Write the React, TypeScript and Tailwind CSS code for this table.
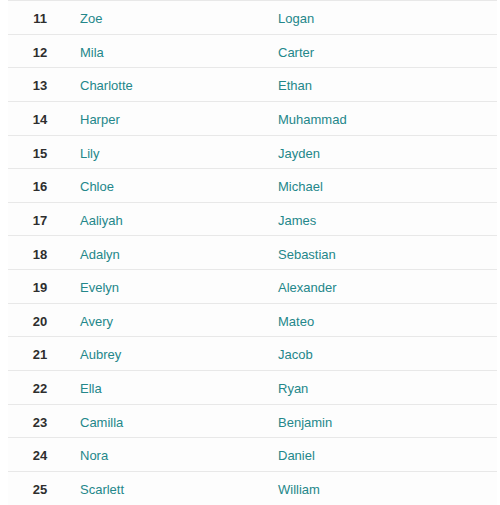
import React from 'react';

const rows: [number, string, string][] = [
  [11, 'Zoe', 'Logan'],
  [12, 'Mila', 'Carter'],
  [13, 'Charlotte', 'Ethan'],
  [14, 'Harper', 'Muhammad'],
  [15, 'Lily', 'Jayden'],
  [16, 'Chloe', 'Michael'],
  [17, 'Aaliyah', 'James'],
  [18, 'Adalyn', 'Sebastian'],
  [19, 'Evelyn', 'Alexander'],
  [20, 'Avery', 'Mateo'],
  [21, 'Aubrey', 'Jacob'],
  [22, 'Ella', 'Ryan'],
  [23, 'Camilla', 'Benjamin'],
  [24, 'Nora', 'Daniel'],
  [25, 'Scarlett', 'William'],
];

const App = () => {
  return (
    <div className="w-[500px] h-[505px] bg-white overflow-hidden font-['Liberation_Sans',Arial,sans-serif] text-[13px]">
      <div className="ml-2 mr-[3px]">
        {rows.map(([rank, girl, boy]) => (
          <div
            key={rank}
            className="flex items-center h-[33.65px] pt-[3px] border-t border-[#e8e8e8] bg-[#fdfdfd]"
          >
            <div className="w-16 text-center font-bold text-[#2e2e2e]">{rank}</div>
            <div className="w-[198px] pl-2 text-[#24878a]">{girl}</div>
            <div className="flex-1 pl-2 text-[#24878a]">{boy}</div>
          </div>
        ))}
      </div>
    </div>
  );
};

export default App;
